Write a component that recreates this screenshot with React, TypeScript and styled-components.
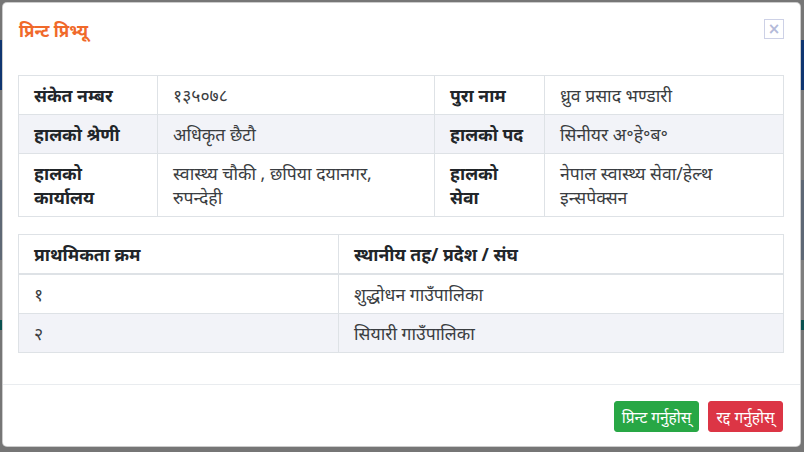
import React from "react";
import styled, { createGlobalStyle } from "styled-components";

const Global = createGlobalStyle`
  html, body { margin: 0; padding: 0; }
  body {
    width: 804px;
    height: 452px;
    overflow: hidden;
    background: #ececec;
    font-family: "Noto Sans", "Lato", sans-serif;
    color: #212529;
  }
`;

const Page = styled.div`
  position: relative;
  width: 804px;
  height: 452px;
  display: flex;
  flex-direction: column;
  padding-top: 40px;
  box-sizing: border-box;
`;

const Band = styled.div<{ $h: number; $c: string }>`
  height: ${(p) => p.$h}px;
  background: ${(p) => p.$c};
`;

const Backdrop = styled.div`
  position: absolute;
  inset: 0;
  background: rgba(0, 0, 0, 0.5);
  display: flex;
  align-items: flex-start;
  padding: 2px 3px 0 2px;
  box-sizing: border-box;
`;

const Modal = styled.div`
  width: 799px;
  height: 445px;
  background: #fff;
  border-radius: 5px;
  display: flex;
  flex-direction: column;
  box-sizing: border-box;
  border: 1px solid rgba(0, 0, 0, 0.2);
`;

const Header = styled.div`
  display: flex;
  justify-content: space-between;
  align-items: flex-start;
  padding: 16px 16px 0 16px;
  height: 56px;
  box-sizing: border-box;
`;

const Title = styled.h5`
  margin: 0;
  font-size: 17px;
  line-height: 24px;
  font-weight: 700;
  color: #f0692a;
`;

const Close = styled.button`
  width: 20px;
  height: 20px;
  padding: 0;
  border: 1px solid #cdd1e6;
  background: #fff;
  color: #b4bad9;
  font-size: 15px;
  line-height: 16px;
  font-weight: 700;
  display: flex;
  align-items: center;
  justify-content: center;
  font-family: "DejaVu Sans", sans-serif;
`;

const Body = styled.div`
  padding: 16px 17px 0 15px;
  flex: 1;
`;

const Table = styled.table`
  width: 100%;
  border-collapse: collapse;
  table-layout: fixed;
  margin-bottom: 17px;
  font-size: 17.6px;
  line-height: 24px;
`;

const Row = styled.tr<{ $striped?: boolean }>`
  background: ${(p) => (p.$striped ? "#f2f3f8" : "#fff")};
`;

const Cell = styled.td<{ $bold?: boolean }>`
  border: 1px solid #dee2e6;
  padding: 7px 15px 7px 15px;
  vertical-align: top;
  font-weight: ${(p) => (p.$bold ? 700 : 400)};
  color: ${(p) => (p.$bold ? "#212529" : "#3a3d41")};
`;

const Head = styled.th`
  border: 1px solid #dee2e6;
  border-bottom: 2px solid #dee2e6;
  padding: 7px 15px;
  text-align: left;
  font-weight: 700;
  vertical-align: top;
`;

const Footer = styled.div`
  border-top: 1px solid #e9ecef;
  padding: 16px 17px 14px 16px;
  display: flex;
  justify-content: flex-end;
  gap: 9px;
`;

const Btn = styled.button<{ $bg: string; $w: number }>`
  width: ${(p) => p.$w}px;
  height: 31px;
  border: 1px solid ${(p) => p.$bg};
  background: ${(p) => p.$bg};
  color: #fff;
  border-radius: 3px;
  font-family: "Noto Sans", sans-serif;
  font-size: 15.5px;
  padding: 0;
`;

export default function App() {
  return (
    <>
      <Global />
      <Page>
        <Band $h={50} $c="#1e6be0" />
        <Band $h={90} $c="#f4f4f4" />
        <Band $h={80} $c="#bcd0ea" />
        <Band $h={60} $c="#ffffff" />
        <Band $h={10} $c="#17a2a0" />
        <Backdrop>
          <Modal>
            <Header>
              <Title>प्रिन्ट प्रिभ्यू</Title>
              <Close aria-label="close">×</Close>
            </Header>
            <Body>
              <Table>
                <colgroup>
                  <col style={{ width: 139 }} />
                  <col style={{ width: 277 }} />
                  <col style={{ width: 110 }} />
                  <col style={{ width: 239 }} />
                </colgroup>
                <tbody>
                  <Row>
                    <Cell $bold>संकेत नम्बर</Cell>
                    <Cell>१३५०७८</Cell>
                    <Cell $bold>पुरा नाम</Cell>
                    <Cell>ध्रुव प्रसाद भण्डारी</Cell>
                  </Row>
                  <Row $striped>
                    <Cell $bold>हालको श्रेणी</Cell>
                    <Cell>अधिकृत छैटौ</Cell>
                    <Cell $bold>हालको पद</Cell>
                    <Cell>सिनीयर अ॰हे॰ब॰</Cell>
                  </Row>
                  <Row>
                    <Cell $bold>हालको कार्यालय</Cell>
                    <Cell>स्वास्थ्य चौकी , छपिया दयानगर, रुपन्देही</Cell>
                    <Cell $bold>हालको सेवा</Cell>
                    <Cell>नेपाल स्वास्थ्य सेवा/हेल्थ इन्सपेक्सन</Cell>
                  </Row>
                </tbody>
              </Table>
              <Table>
                <colgroup>
                  <col style={{ width: 320 }} />
                  <col style={{ width: 445 }} />
                </colgroup>
                <thead>
                  <Row>
                    <Head>प्राथमिकता क्रम</Head>
                    <Head>स्थानीय तह/ प्रदेश / संघ</Head>
                  </Row>
                </thead>
                <tbody>
                  <Row>
                    <Cell>१</Cell>
                    <Cell>शुद्धोधन गाउँपालिका</Cell>
                  </Row>
                  <Row $striped>
                    <Cell>२</Cell>
                    <Cell>सियारी गाउँपालिका</Cell>
                  </Row>
                </tbody>
              </Table>
            </Body>
            <Footer>
              <Btn $bg="#28a745" $w={85}>प्रिन्ट गर्नुहोस्</Btn>
              <Btn $bg="#dc3545" $w={75}>रद्द गर्नुहोस्</Btn>
            </Footer>
          </Modal>
        </Backdrop>
      </Page>
    </>
  );
}
